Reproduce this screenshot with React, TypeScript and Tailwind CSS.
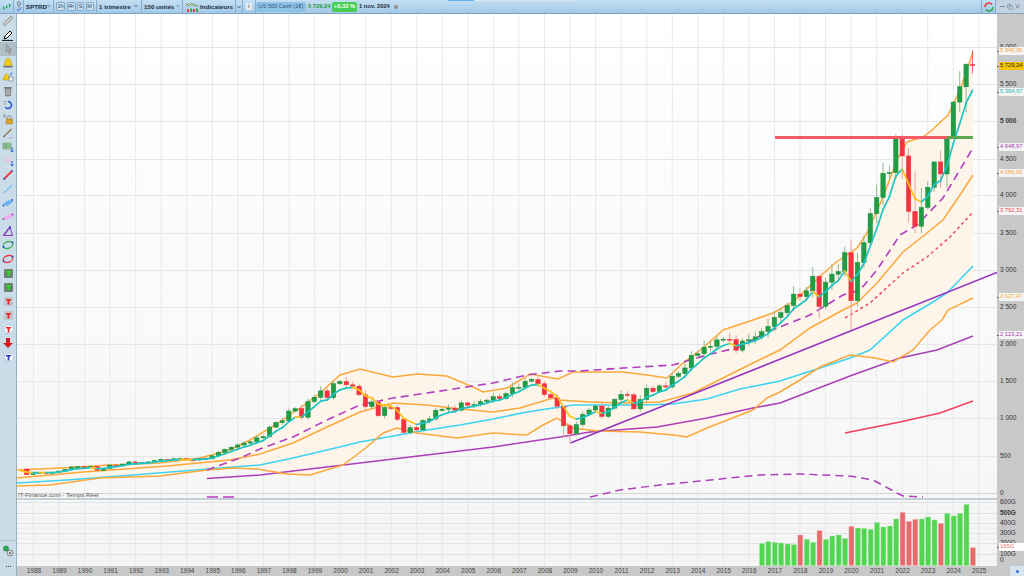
import React from 'react';
import { ChevronDown, Minus, X, Copy } from 'lucide-react';

type Pt = [number, number];

const closes = [
    322, 247, 259, 274, 272, 278, 295, 318, 349, 353, 339, 358, 306, 330, 375, 371, 388, 417, 404, 408, 418, 436, 452, 450, 459, 466,
    445, 444, 463, 459, 500, 545, 584, 616, 645, 671, 687, 741, 757, 885, 947, 970, 1101, 1133, 1017, 1229, 1286, 1372, 1282, 1469,
    1498, 1454, 1436, 1320, 1160, 1224, 1040, 1148, 1147, 989, 815, 879, 848, 974, 995, 1111, 1126, 1140, 1114, 1211, 1180, 1191, 1228, 1248,
    1294, 1270, 1335, 1418, 1420, 1503, 1526, 1468, 1322, 1280, 1166, 903, 797, 919, 1057, 1115, 1169, 1030, 1141, 1257, 1325, 1320, 1131, 1257,
    1408, 1362, 1440, 1426, 1569, 1606, 1681, 1848, 1872, 1960, 1972, 2058, 2067, 2063, 1920, 2043, 2059, 2098, 2168, 2238, 2362, 2423, 2519, 2673,
    2640, 2718, 2913, 2506, 2834, 2941, 2976, 3230, 2584, 3100, 3363, 3756, 3972, 4297, 4307, 4766, 4530, 3785, 3585, 3839, 4109, 4450, 4288, 4769,
    5254, 5460, 5762, 5729,
];

// index 0 is 1987 Q3
const wicks: Record<number, [number, number]> = {
    85: [1044, 741],
    86: [935, 667],
    125: [2941, 2346],
    130: [3393, 2191],
    137: [4818, 4222],
    138: [4818, 4222],
    139: [4637, 3636],
    140: [4325, 3491],
    141: [4100, 3491],
    142: [4195, 3808],
    143: [4450, 4050],
    144: [4607, 4103],
    145: [4793, 4103],
    146: [5264, 4953],
    147: [5669, 5119],
    148: [5780, 5119],
    149: [5950, 5640],
};

const xOf = (i: number) => 20.4 + i * 6.39;
const yOf = (p: number) => 493 - p * 0.0744;

const upper: Pt[] = [[17, 470], [60, 468], [110, 465], [160, 463], [200, 458], [230, 450], [250, 440], [275, 425], [300, 408], [320, 393], [340, 375], [360, 369], [393, 377], [417, 374], [447, 376], [473, 387], [483, 392], [507, 388], [530, 374], [558, 379], [573, 372], [623, 372], [647, 375], [667, 378], [683, 363], [703, 348], [723, 330], [753, 320], [773, 313], [793, 302], [813, 283], [835, 263], [857, 248], [867, 233], [883, 197], [897, 160], [907, 142], [923, 137], [932, 130], [948, 115], [960, 90], [973, 52]];
const middle: Pt[] = [[17, 478], [83, 472], [167, 466], [230, 460], [260, 454], [293, 443], [327, 427], [360, 412], [393, 403], [427, 405], [460, 409], [493, 412], [520, 408], [553, 398], [560, 400], [590, 402], [623, 403], [660, 402], [693, 393], [723, 378], [753, 363], [780, 350], [810, 328], [843, 310], [857, 303], [877, 283], [903, 252], [927, 233], [943, 220], [960, 195], [973, 175]];
const lower: Pt[] = [[17, 486], [50, 485], [100, 478], [160, 476], [207, 470], [233, 468], [257, 469], [287, 474], [310, 475], [343, 465], [367, 447], [383, 433], [397, 428], [417, 433], [457, 438], [493, 433], [527, 435], [543, 425], [557, 418], [573, 428], [597, 431], [640, 432], [673, 435], [687, 437], [707, 428], [753, 410], [767, 398], [780, 392], [800, 380], [820, 367], [850, 355], [875, 358], [893, 362], [913, 350], [930, 330], [942, 320], [948, 310], [973, 298]];
const cyan: Pt[] = [[17, 483], [67, 480], [133, 475], [233, 467], [260, 465], [293, 458], [327, 450], [360, 442], [393, 436], [427, 430], [460, 425], [493, 419], [527, 412], [560, 407], [573, 405], [640, 405], [673, 404], [707, 399], [740, 389], [780, 381], [820, 368], [850, 358], [870, 350], [903, 320], [933, 302], [947, 293], [973, 266]];
const purple: Pt[] = [[207, 478.5], [260, 475], [360, 463], [410, 457], [493, 447], [560, 437], [590, 432], [657, 427], [707, 418], [753, 408], [780, 403], [850, 376], [900, 358], [937, 350], [973, 336]];
const dashedPurple: Pt[] = [[207, 470], [240, 458], [260, 449], [293, 437], [327, 420], [360, 405], [393, 398], [427, 393], [460, 388], [493, 383], [527, 375], [560, 371], [580, 371], [623, 368], [673, 365], [707, 355], [740, 347], [767, 332], [810, 315], [843, 295], [860, 290], [877, 270], [900, 235], [917, 225], [943, 198], [973, 148]];
const dottedRed: Pt[] = [[845, 318], [870, 303], [903, 273], [927, 257], [950, 237], [973, 212]];
const redLine: Pt[] = [[845, 433], [900, 422], [940, 413], [973, 401]];
const lowerPane: Pt[] = [[590, 497], [620, 490], [660, 485], [700, 481], [760, 475], [800, 474], [850, 476], [873, 480], [897, 493], [903, 496], [923, 497]];

const pts = (list: Pt[]) => list.map((p) => p.join(',')).join(' ');

const ema: number[] = [];
closes.forEach((c, i) => ema.push(i === 0 ? 300 : ema[i - 1] + (c - ema[i - 1]) * 0.35));

// top of each volume bar in page pixels, from 2016 Q3
const volumeTops = [190, 185, 187, 189, 192, 194, 165, 178, 187, 152, 178, 168, 165, 176, 139, 144, 145, 148, 128, 141, 138, 117, 97, 124, 118, 117, 111, 120, 130, 100, 108, 100, 73, 203].map((v) => 480 + v / 3);
const volumeReds = [6, 9, 14, 22, 23, 24, 28, 33];

const years = Array.from({ length: 38 }, (_, i) => 1988 + i);
const ticks = [
    { label: '6 000', y: 47, bold: false },
    { label: '5 500', y: 84, bold: false },
    { label: '5 000', y: 121, bold: true },
    { label: '4 500', y: 159, bold: false },
    { label: '4 000', y: 195, bold: false },
    { label: '3 500', y: 233, bold: false },
    { label: '3 000', y: 270, bold: false },
    { label: '2 500', y: 307, bold: false },
    { label: '2 000', y: 344, bold: false },
    { label: '1 500', y: 381, bold: false },
    { label: '1 000', y: 418, bold: false },
    { label: '500', y: 456, bold: false },
    { label: '0', y: 493, bold: false },
    { label: '600G', y: 502, bold: false },
    { label: '500G', y: 513, bold: true },
    { label: '400G', y: 523, bold: false },
    { label: '300G', y: 533, bold: false },
    { label: '200G', y: 543, bold: false },
    { label: '100G', y: 554, bold: false },
    { label: '0', y: 560, bold: false },
];
const tags = [
    { label: '5 946,36', y: 51, cls: 'text-[#f5a742] bg-white/80' },
    { label: '5 729,24', y: 66, cls: 'text-[#222] bg-[#f6c500]' },
    { label: '5 384,97', y: 92, cls: 'text-[#22b5b5] bg-white/80' },
    { label: '4 648,97', y: 147, cls: 'text-[#a43cb0] bg-white/80' },
    { label: '4 286,92', y: 173, cls: 'text-[#f5a742] bg-white/80' },
    { label: '3 792,31', y: 211, cls: 'text-[#ee4455] bg-white/80' },
    { label: '2 627,47', y: 297, cls: 'text-[#f5a742] bg-white/80' },
    { label: '2 123,21', y: 335, cls: 'text-[#a43cb0] bg-white/80' },
    { label: '165G', y: 547, cls: 'text-[#e87070] bg-white' },
];

function Divider() {
    return <div className="h-full w-px shrink-0 bg-[#86adcc]" />;
}

function TfButton({ label, width }: { label: string; width: string }) {
    return (
        <div className={`flex h-[9px] items-center justify-center rounded-[1px] border border-[#86a9c6] bg-[#c9e0f2] text-[5.5px] text-[#33475a] ${width}`}>
            {label}
        </div>
    );
}

function Dropdown({ label, textWidth }: { label: string; textWidth: string }) {
    return (
        <div className="flex items-center gap-[2px] px-[2px]">
            <span className={`text-[6.2px] font-bold whitespace-nowrap text-[#1c2c3c] ${textWidth}`}>{label}</span>
            <ChevronDown className="h-[6px] w-[6px] text-[#2a3a4a]" strokeWidth={3} />
        </div>
    );
}

function TopBar() {
    return (
        <div className="relative flex h-[14px] w-full shrink-0 items-center border-b border-[#7ea6c6] bg-linear-to-b from-[#c4dff3] to-[#a3c9e6] font-['Liberation_Sans',sans-serif]">
            <div className="absolute top-0 left-[448px] h-px w-[26px] bg-[#62b0f0]" />
            <div className="absolute top-0 left-[474px] h-px w-[102px] bg-[#d8e6ee]" />
            <div className="flex h-full w-[13px] shrink-0 items-center justify-center">
                <svg width="9" height="8" viewBox="0 0 9 8">
                    <path d="M1.5 3v4M4.5 2v4M7.5 0v5" stroke="#8aa" strokeWidth="0.6" />
                    <rect x="1" y="4" width="1.4" height="2.4" fill="#22a050" />
                    <rect x="4" y="2.6" width="1.4" height="2.6" fill="#22a050" />
                    <rect x="7" y="1" width="1.4" height="3" fill="#22a050" />
                </svg>
            </div>
            <Divider />
            <div className="flex h-full w-[9px] shrink-0 items-center justify-center">
                <svg width="6" height="11" viewBox="0 0 6 11">
                    <circle cx="3" cy="2.5" r="1.8" fill="none" stroke="#667" strokeWidth="0.8" />
                    <path d="M3 4.5V7" stroke="#778" strokeWidth="0.8" />
                    <path d="M1 8l1.4 1.6L5 6.6" fill="none" stroke="#2a5fd0" strokeWidth="1" />
                </svg>
            </div>
            <Divider />
            <div className="w-[29px] shrink-0"><Dropdown label="SPTRD" textWidth="w-[18px]" /></div>
            <Divider />
            <div className="flex w-[42px] shrink-0 items-center gap-[1.5px] pl-[2px]">
                <TfButton label="1h" width="w-[9px]" />
                <TfButton label="4h" width="w-[9px]" />
                <TfButton label="S" width="w-[7px]" />
                <TfButton label="M" width="w-[8px]" />
            </div>
            <Divider />
            <div className="w-[44px] shrink-0"><Dropdown label="1 trimestre" textWidth="w-[33px]" /></div>
            <Divider />
            <div className="w-[40px] shrink-0"><Dropdown label="150 unités" textWidth="w-[30px]" /></div>
            <Divider />
            <div className="flex h-full w-[52px] shrink-0 items-center gap-[2px] pl-[3px]">
                <svg width="12" height="11" viewBox="0 0 12 11">
                    <path d="M0 5l3-3 3 3 3-2 3 3" fill="none" stroke="#e0803a" strokeWidth="0.8" />
                    <path d="M0 3l3 2 3-3 3 3 3-1" fill="none" stroke="#38a858" strokeWidth="0.8" />
                    <rect x="1" y="8" width="2" height="3" fill="#dd4444" />
                    <rect x="4" y="7.5" width="2" height="3.5" fill="#44aa44" />
                    <rect x="7" y="8" width="2" height="3" fill="#dd4444" />
                    <rect x="10" y="7.5" width="2" height="3.5" fill="#44aa44" />
                </svg>
                <span className="text-[6.2px] font-bold whitespace-nowrap text-[#1c2c3c]">Indicateurs</span>
            </div>
            <Divider />
            <div className="flex h-full w-[6px] shrink-0 items-center justify-center">
                <ChevronDown className="h-[6px] w-[6px] text-[#2a3a4a]" strokeWidth={3} />
            </div>
            <Divider />
            <div className="flex h-full w-[12px] shrink-0 items-center justify-center">
                <div className="flex h-[7px] w-[6px] items-center justify-center rounded-[1px] bg-[#e4edf3] text-[5px] font-bold text-[#556]">i</div>
            </div>
            <Divider />
            <div className="mr-[2px] flex h-[10px] w-[50px] shrink-0 items-center justify-center rounded-[2px] bg-[#8fc2e8] text-[5.6px] whitespace-nowrap text-[#3a5570]">US 500 Cash (1€)</div>
            <div className="w-[24px] shrink-0 text-[5.8px] font-bold whitespace-nowrap text-[#1f9a3c]">5 729,24</div>
            <div className="flex h-[10px] w-[25px] shrink-0 items-center justify-center rounded-[2px] bg-[#46cf52] text-[5.8px] font-bold whitespace-nowrap text-white">+0,33 %</div>
            <div className="ml-[2px] w-[35px] shrink-0 text-[5.8px] font-bold whitespace-nowrap text-[#1c2c3c]">1 nov. 2024</div>
            <div className="h-[4px] w-[4px] shrink-0 rounded-full bg-[#8c8c8c]" />
            <div className="ml-auto flex h-full items-center">
                <Divider />
                <div className="flex h-full w-[13px] items-center justify-center">
                    <svg width="10" height="10" viewBox="0 0 10 10">
                        <path d="M1 5a4 4 0 0 1 7-2.6" fill="none" stroke="#e23a3a" strokeWidth="1.6" />
                        <path d="M9 5a4 4 0 0 1-7 2.6" fill="none" stroke="#2fae4a" strokeWidth="1.6" />
                    </svg>
                </div>
                <Divider />
                <div className="flex h-full w-[28px] items-center justify-center gap-[1px] bg-[#c3d4e0] text-[#6b7f90]">
                    <Minus className="h-[7px] w-[7px]" strokeWidth={3} />
                    <Copy className="h-[6px] w-[6px]" strokeWidth={2.5} />
                    <X className="h-[7px] w-[7px]" strokeWidth={3} />
                </div>
            </div>
        </div>
    );
}

function TBadge({ bg, color, round }: { bg: string; color: string; round?: boolean }) {
    return (
        <svg width="11" height="11" viewBox="0 0 11 11">
            {round ? (
                <path d="M5.5 1a4.5 4.2 0 1 1-1.5 8.1L3 10.6l-.2-2.4A4.5 4.2 0 0 1 5.5 1z" fill={bg} stroke="#9bb4d8" strokeWidth="0.6" />
            ) : (
                <rect x="1" y="1" width="9" height="9" rx="1" fill={bg} />
            )}
            <path d="M3 3h5v1.6H6.4V8.6H4.6V4.6H3z" fill={color} />
        </svg>
    );
}

const tools: React.ReactNode[] = [
    <svg width="12" height="12" viewBox="0 0 12 12"><path d="M1 9l8-8 2 2-8 8z" fill="#c8c8c8" stroke="#888" strokeWidth="0.7" /></svg>,
    <svg width="12" height="12" viewBox="0 0 12 12"><path d="M3 7l5-5 2 2-5 5-3 1z" fill="#fff" stroke="#111" strokeWidth="1" /><path d="M0 11.5h11" stroke="#222" strokeWidth="1.2" /></svg>,
    <svg width="12" height="12" viewBox="0 0 12 12"><path d="M4 1.5v8l2-2 1.4 3 1-.5L7 7h3z" fill="#aaa" stroke="#777" strokeWidth="0.5" /></svg>,
    <svg width="12" height="12" viewBox="0 0 12 12"><path d="M6 1.5c2 0 3 1.6 3 3.5 0 2 1.5 3 1.5 3.5h-9C1.500 8 3 7 3 5c0-1.900 1-3.500 3-3.500z" fill="#f2c914" stroke="#a88a10" strokeWidth="0.4" /><rect x="1.500" y="9" width="9" height="1.500" fill="#333" opacity="0.6" /></svg>,
    <svg width="12" height="12" viewBox="0 0 12 12"><path d="M4.500 3c1.600 0 2.400 1.400 2.400 3 0 1.600 1.400 2.400 1.400 3H.7C.7 8.400 2 7.600 2 6c0-1.600 1-3 2.500-3z" fill="#f2c914" stroke="#a88a10" strokeWidth="0.4" /><rect x="7" y="6" width="4" height="4" fill="#e8eef4" stroke="#667" strokeWidth="0.5" /><path d="M8 4.500l2-3" stroke="#2a5fd0" strokeWidth="1" /></svg>,
    <svg width="12" height="12" viewBox="0 0 12 12"><path d="M3 3.500h6l-.6 7.500H3.600z" fill="#999" stroke="#666" strokeWidth="0.5" /><rect x="2.200" y="2" width="7.600" height="1.400" fill="#777" /><path d="M5 4.500v5M7 4.500v5" stroke="#ddd" strokeWidth="0.6" /></svg>,
    <svg width="12" height="12" viewBox="0 0 12 12"><path d="M6 2.500a3.500 3.500 0 1 1-2.800 5.600" fill="none" stroke="#2a4fd0" strokeWidth="1.500" /><path d="M1 2.500h4M1 5h3" stroke="#aaa" strokeWidth="1.200" /></svg>,
    <svg width="12" height="12" viewBox="0 0 12 12"><path d="M1 1.500h3v3H1z" fill="#aaa" /><rect x="4" y="6" width="6.500" height="5" rx="0.500" fill="#d9a520" stroke="#8a6a10" strokeWidth="0.400" /><path d="M5.500 6V4.500a1.800 1.800 0 0 1 3.600 0V6" fill="none" stroke="#777" strokeWidth="0.800" /></svg>,
    <svg width="12" height="12" viewBox="0 0 12 12"><path d="M2 9.500L9.500 2" stroke="#9a7a50" strokeWidth="1.500" /><path d="M6 11h5" stroke="#aaa" strokeWidth="0.800" /><circle cx="2" cy="9.500" r="0.900" fill="#776" /></svg>,
    <svg width="12" height="12" viewBox="0 0 12 12"><rect x="1" y="2" width="8" height="6" fill="#9fcb9f" stroke="#5a9a6a" strokeWidth="0.500" /><path d="M1 4h8M1 6h8M4 2v6" stroke="#4a8a5a" strokeWidth="0.500" /><path d="M10 6v5M8.500 9.500l1.500 1.500 1.500-1.500" fill="none" stroke="#2a5fd0" strokeWidth="1" /></svg>,
    <svg width="12" height="12" viewBox="0 0 12 12"><path d="M1 3.500h8M1 6h8" stroke="#eeb6dc" strokeWidth="1.100" /><path d="M10 6v5M8.500 9.500l1.500 1.500 1.500-1.500" fill="none" stroke="#2a5fd0" strokeWidth="1" /></svg>,
    <svg width="12" height="12" viewBox="0 0 12 12"><path d="M2 10l8-8" stroke="#ee3a4a" strokeWidth="2" /><circle cx="2" cy="10" r="0.900" fill="#2a5fd0" /><circle cx="10" cy="2" r="0.900" fill="#2a5fd0" /></svg>,
    <svg width="12" height="12" viewBox="0 0 12 12"><path d="M2 10l8-8" stroke="#7cc4f0" strokeWidth="1.500" /><path d="M7 11h4" stroke="#7cc4f0" strokeDasharray="1 1" /></svg>,
    <svg width="12" height="12" viewBox="0 0 12 12"><path d="M1 7l6-4 4 2-6 4z" fill="#66b2f2" /><circle cx="1.500" cy="8.500" r="1" fill="#2a4fd0" /><circle cx="10" cy="3" r="1" fill="#2a4fd0" /></svg>,
    <svg width="12" height="12" viewBox="0 0 12 12"><path d="M1 7l6-4 4 2-6 4z" fill="#f3a8ee" /><circle cx="1.500" cy="8" r="1" fill="#b030c0" /><circle cx="10.500" cy="3.500" r="1" fill="#b030c0" /></svg>,
    <svg width="12" height="12" viewBox="0 0 12 12"><path d="M1.500 10.500h9L8 2z" fill="none" stroke="#8a3ac0" strokeWidth="1" /><path d="M1.500 10.500L8 2" stroke="#8a3ac0" strokeWidth="1.400" /><circle cx="8" cy="2" r="1" fill="#2a4fd0" /></svg>,
    <svg width="12" height="12" viewBox="0 0 12 12"><ellipse cx="6" cy="6" rx="5" ry="3.300" transform="rotate(-20 6 6)" fill="none" stroke="#2faa4a" strokeWidth="1.200" /><circle cx="1.500" cy="8" r="1" fill="#2a4fd0" /><circle cx="10.500" cy="3.500" r="1" fill="#2a4fd0" /></svg>,
    <svg width="12" height="12" viewBox="0 0 12 12"><ellipse cx="6" cy="6" rx="5" ry="3.300" transform="rotate(-20 6 6)" fill="none" stroke="#ee2a3a" strokeWidth="1.200" /><circle cx="1.500" cy="8" r="1" fill="#2a4fd0" /><circle cx="10.500" cy="3.500" r="1" fill="#2a4fd0" /></svg>,
    <TBadge bg="#6f7f70" color="#22dd22" />,
    <TBadge bg="#6f7f70" color="#22dd22" />,
    <TBadge bg="#bfc4c8" color="#e8222a" />,
    <TBadge bg="#bfc4c8" color="#e8222a" />,
    <TBadge bg="#ffffff" color="#e8222a" round />,
    <svg width="12" height="12" viewBox="0 0 12 12"><path d="M4 1h4v5h3l-5 5-5-5h3z" fill="#d81a24" /></svg>,
    <TBadge bg="#ffffff" color="#2a3ac0" round />,
];

function LeftBar() {
    return (
        <div className="flex h-full w-[17px] shrink-0 flex-col border-r border-[#9ab0bf] bg-[#c9dce8]">
            {tools.map((icon, i) => (
                <div key={i} className={`flex h-[14px] w-full shrink-0 items-center justify-center ${i === 2 ? 'bg-[#b0bec8]' : ''}`}>
                    {icon}
                </div>
            ))}
            <div className="mt-auto flex h-[36px] flex-col border-t border-[#aebfca] pb-[4px]">
                <div className="flex h-[20px] items-center justify-center">
                    <svg width="12" height="12" viewBox="0 0 12 12">
                        <circle cx="8" cy="8" r="3" fill="#d0d4d8" stroke="#666" strokeWidth="0.700" />
                        <circle cx="8" cy="8" r="1" fill="#666" />
                        <circle cx="4" cy="3.500" r="2.600" fill="#2faa4a" stroke="#116a2a" strokeWidth="0.500" />
                    </svg>
                </div>
                <div className="flex h-[11px] items-center justify-center gap-px">
                    <div className="h-px w-px bg-[#445]" />
                    <div className="h-px w-px bg-[#445]" />
                    <div className="h-px w-px bg-[#445]" />
                </div>
            </div>
        </div>
    );
}

function PricePane() {
    const yearLines = years.map((y, i) => 33.5 + i * 25.55);
    return (
        <svg viewBox="17 14 980 484" className="block h-[484px] w-[980px]">
            {yearLines.map((x) => (
                <line key={x} x1={x} x2={x} y1={14} y2={498} stroke="#e9e9e9" strokeWidth="1" />
            ))}
            {[47, 84, 121, 159, 195, 233, 270, 307, 344, 381, 418, 456].map((y) => (
                <line key={y} x1={17} x2={997} y1={y + 0.5} y2={y + 0.5} stroke="#e6e6e6" strokeWidth="1" />
            ))}
            <line x1={17} x2={997} y1={493.5} y2={493.5} stroke="#d4d4d4" strokeWidth="1" />

            <polygon points={pts([...upper, ...[...lower].reverse()])} fill="#fdf5e9" />

            <polyline points={pts(purple)} fill="none" stroke="#ab3fb9" strokeWidth="1.600" />
            <polyline points={pts(cyan)} fill="none" stroke="#3dd3f2" strokeWidth="1.600" />
            <polyline points={pts(lower)} fill="none" stroke="#fba83c" strokeWidth="1.500" />
            <polyline points={pts(middle)} fill="none" stroke="#fba83c" strokeWidth="1.500" />
            <polyline points={pts(upper)} fill="none" stroke="#fba83c" strokeWidth="1.500" />
            <polyline points={pts(dashedPurple)} fill="none" stroke="#b03fbe" strokeWidth="1.600" strokeDasharray="8 5" />
            <polyline points={pts(dottedRed)} fill="none" stroke="#f24a58" strokeWidth="1.500" strokeDasharray="3 3" />
            <polyline points={pts(redLine)} fill="none" stroke="#f0405a" strokeWidth="1.600" />
            <line x1={570.500} y1={443} x2={997} y2={272.500} stroke="#9233c0" strokeWidth="1.600" />

            {closes.map((c, i) => {
                if (i === 0) return null;
                const o = closes[i - 1];
                const up = c >= o;
                const w = 0.015 + (((i * 37) % 10) / 10) * 0.035;
                const wick = wicks[i] ?? [Math.max(o, c) * (1 + w), Math.min(o, c) * (1 - w * 0.8)];
                const x = xOf(i);
                const top = yOf(Math.max(o, c));
                const h = Math.max(1, Math.abs(yOf(o) - yOf(c)));
                if (i === 149) {
                    return (
                        <g key={i}>
                            <line x1={x} x2={x} y1={yOf(wick[0])} y2={yOf(wick[1])} stroke="#ef4450" strokeWidth="0.800" />
                            <rect x={x - 2.500} y={top} width={5} height={1.500} fill="#f0303c" />
                        </g>
                    );
                }
                return (
                    <g key={i}>
                        <line x1={x} x2={x} y1={yOf(wick[0])} y2={yOf(wick[1])} stroke={up ? '#8fb98f' : '#eaa0a0'} strokeWidth="1" />
                        <rect x={x - 2.200} y={top} width={4.400} height={h} fill={up ? '#1f9e45' : '#f5333f'} stroke={up ? '#16893a' : '#f0303c'} strokeWidth="0.500" />
                    </g>
                );
            })}

            {closes.slice(1).map((c, n) => {
                const i = n + 1;
                const rising = ema[i] >= ema[i - 1];
                return (
                    <line
                        key={i}
                        x1={xOf(i - 1)}
                        y1={yOf(ema[i - 1])}
                        x2={xOf(i)}
                        y2={yOf(ema[i])}
                        stroke={rising ? '#1fc4c4' : '#fcc21a'}
                        strokeWidth="1.700"
                        strokeLinecap="round"
                    />
                );
            })}

            <line x1={775} x2={947} y1={137.500} y2={137.500} stroke="#f65a64" strokeWidth="3" />
            <line x1={947} x2={973} y1={137.500} y2={137.500} stroke="#5fa64c" strokeWidth="3" />

            <polyline points={pts(lowerPane)} fill="none" stroke="#b03fbe" strokeWidth="1.500" strokeDasharray="8 5" />
            <path d="M207 497H218M223 497H234" stroke="#b03fbe" strokeWidth="1.500" />
            <text x={18} y={497} fontSize="6.200" fill="#555" fontFamily="Liberation Sans, sans-serif">IT-Finance.com - Temps Réel</text>
        </svg>
    );
}

function VolumePane() {
    return (
        <svg viewBox="17 500 980 66" className="block h-[66px] w-[980px]">
            {years.map((y, i) => (
                <line key={y} x1={33.500 + i * 25.55} x2={33.500 + i * 25.55} y1={500} y2={566} stroke="#e6e6e6" strokeWidth="1" />
            ))}
            {[502, 507, 513, 518, 523, 528, 533, 538, 543, 549, 554, 560].map((y, i) => (
                <line key={y} x1={17} x2={997} y1={y + 0.500} y2={y + 0.500} stroke={i % 2 === 0 ? '#e2e2e2' : '#efefef'} strokeWidth="1" />
            ))}
            {volumeTops.map((top, i) => (
                <rect
                    key={i}
                    x={759.500 + i * 6.39}
                    y={top}
                    width={5}
                    height={565.500 - top}
                    fill={volumeReds.includes(i) ? '#e66a6a' : '#52d652'}
                    stroke={volumeReds.includes(i) ? '#f3b5b5' : '#a3e8a3'}
                    strokeWidth="0.500"
                />
            ))}
        </svg>
    );
}

function PriceAxis() {
    return (
        <div className="relative h-full w-[27px] shrink-0 bg-[#c8c8c8]">
            {ticks.map((t) => (
                <span
                    key={`${t.label}-${t.y}`}
                    className={`absolute left-[3px] -translate-y-1/2 text-[6.500px] leading-none whitespace-nowrap text-[#333] ${t.bold ? 'font-bold' : ''}`}
                    style={{ top: t.y - 14 }}
                >
                    {t.label}
                </span>
            ))}
            {tags.map((t) => (
                <React.Fragment key={t.label}>
                    <div className="absolute left-0 h-px w-[2px] bg-[#666]" style={{ top: t.y - 14 }} />
                    <span
                        className={`absolute left-[2px] flex h-[8px] w-[25px] -translate-y-1/2 items-center pl-px text-[5.800px] leading-none whitespace-nowrap ${t.cls}`}
                        style={{ top: t.y - 14 }}
                    >
                        {t.label}
                    </span>
                </React.Fragment>
            ))}
        </div>
    );
}

export default function App() {
    return (
        <div className="flex h-[576px] w-[1024px] flex-col overflow-hidden bg-white font-['Liberation_Sans',sans-serif]">
            <TopBar />
            <div className="flex min-h-0 flex-1">
                <LeftBar />
                <div className="flex min-w-0 flex-1 flex-col">
                    <div className="flex h-[552px] shrink-0">
                        <div className="flex w-[980px] shrink-0 flex-col bg-linear-to-b from-white to-[#f5f5f5]">
                            <PricePane />
                            <div className="h-[2px] shrink-0 bg-[#c3d0d8]" />
                            <VolumePane />
                        </div>
                        <PriceAxis />
                    </div>
                    <div className="flex h-[10px] shrink-0 items-center bg-[#c8c8c8] pl-[4.200px]">
                        {years.map((y) => (
                            <div key={y} className="w-[25.550px] shrink-0 text-center text-[6.500px] leading-none text-[#444]">{y}</div>
                        ))}
                        <div className="ml-auto flex h-full w-[14px] items-center justify-center bg-[#d6e4ee]">
                            <div className="h-[3px] w-[3px] rounded-full bg-[#2a6fd0]" />
                        </div>
                    </div>
                </div>
            </div>
        </div>
    );
}
